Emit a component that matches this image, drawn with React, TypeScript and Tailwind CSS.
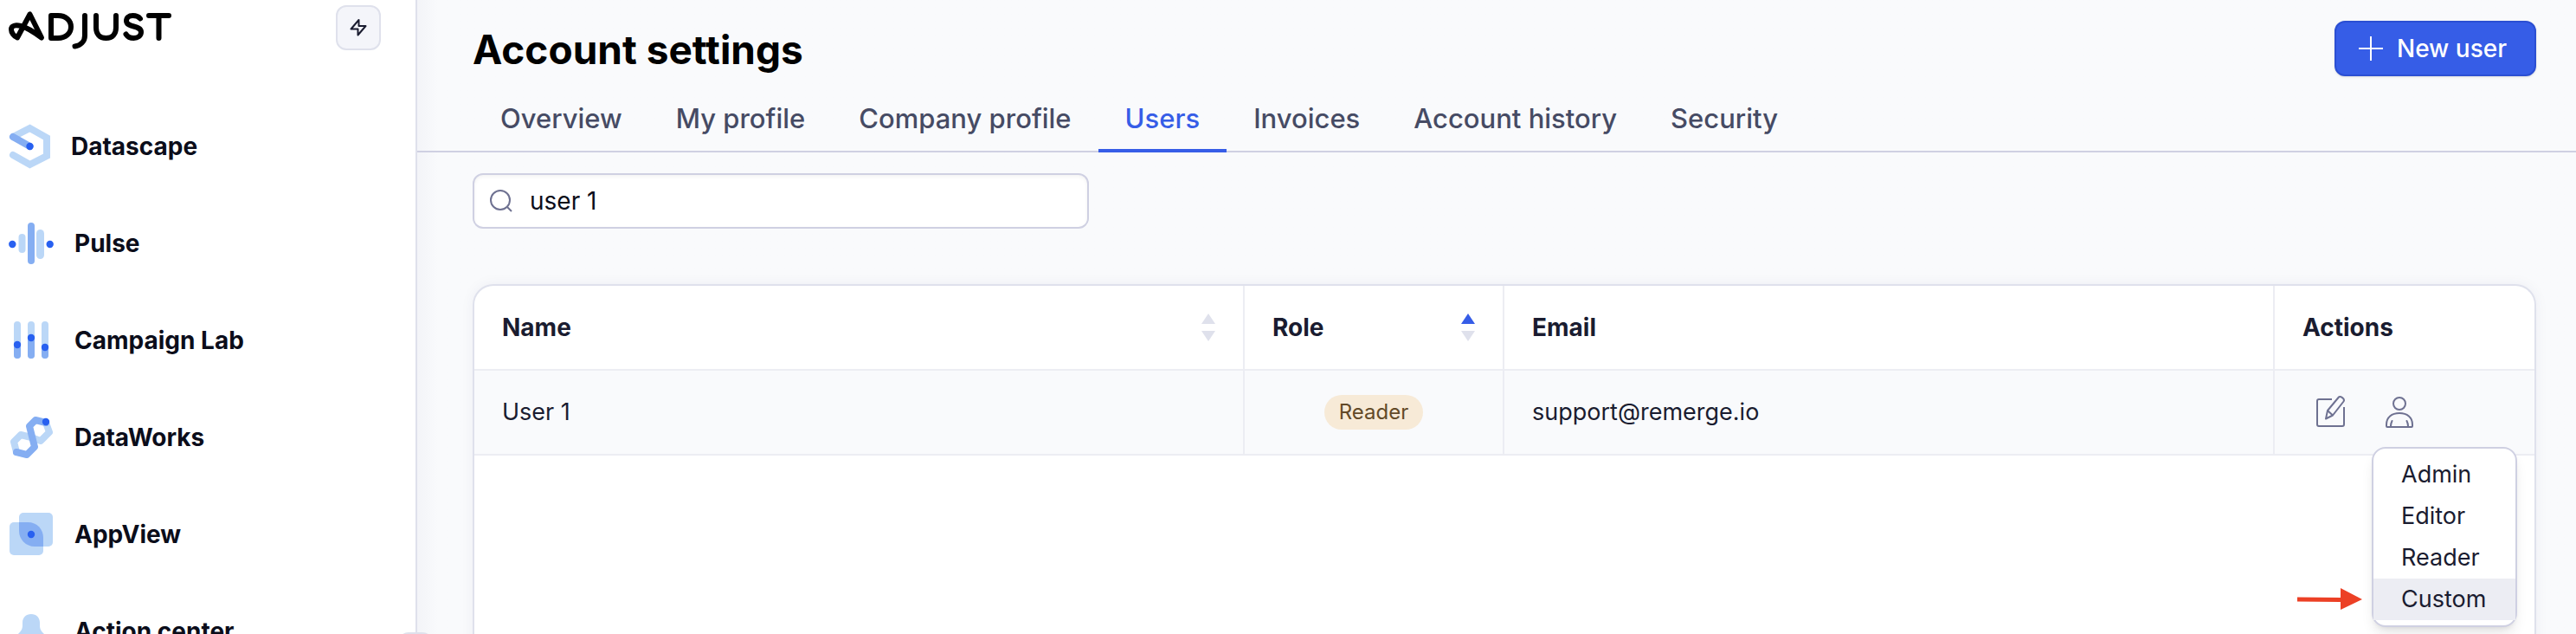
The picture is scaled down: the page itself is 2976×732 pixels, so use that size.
import { clsx } from "clsx";

const tabs = ["Overview", "My profile", "Company profile", "Users", "Invoices", "Account history", "Security"];
const roles = ["Admin", "Editor", "Reader", "Custom"];

function Logo() {
    return (
        <svg viewBox="0 0 190 46" className="w-[190px] h-[46px]" fill="none" stroke="#000" strokeWidth="6" strokeLinecap="round" strokeLinejoin="round" role="img" aria-label="Adjust">
            <path d="M24.500 4.500 10 31.500C6 30 3 25.500 3 22c0-4.500 5-5.500 11-4 8 2 16 7.500 24 13.500z" />
            <path d="M49 6h8c9 0 15 5.500 15 13s-6 13-15 13h-8z" />
            <path d="M88 6v23c0 7-5 11.500-11.500 12.500" />
            <path d="M101 6v14c0 7 4 12 11.500 12S124 27 124 20V6" />
            <path d="M152 9.500c-2-2.500-5-3.500-8.500-3.500-5 0-7.500 2.500-7.500 6 0 8.500 17 4.500 17 13 0 4.500-4 7-8.500 7-4 0-7-1.500-9-4.500" />
            <path d="M162 6h23M173.500 6v26" />
        </svg>
    );
}

function DatascapeIcon() {
    return (
        <svg viewBox="0 0 48 52" className="w-12 h-[52px]" fill="none" strokeWidth="8" strokeLinecap="round">
            <path d="M5 15 24.500 5 44 16v21L24.500 47 5 36" stroke="#bbd7f7" />
            <path d="m5 15 19.500 11" stroke="#85aef2" />
            <circle cx="24.500" cy="26" r="4.200" fill="#2860f0" />
        </svg>
    );
}

function PulseIcon() {
    return (
        <svg viewBox="0 0 52 52" className="w-[52px] h-[52px]">
            <rect x="11.500" y="15" width="8" height="22" rx="4" fill="#bbd7f7" />
            <rect x="22" y="2" width="8" height="48" rx="4" fill="#85aef2" />
            <rect x="32" y="10" width="9" height="34" rx="4.500" fill="#bbd7f7" />
            <circle cx="4.300" cy="27" r="4.200" fill="#2860f0" />
            <circle cx="47.700" cy="27" r="4.200" fill="#2860f0" />
        </svg>
    );
}

function CampaignIcon() {
    return (
        <svg viewBox="0 0 52 52" className="w-[52px] h-[52px]" strokeWidth="8" strokeLinecap="round">
            <path d="M10 8v35M26 8v35M42 8v35" stroke="#bbd7f7" />
            <path d="M10 31v12M26 23v20M42 34v9" stroke="#85aef2" />
            <g fill="#2860f0">
                <circle cx="10" cy="31" r="4.200" />
                <circle cx="26" cy="23" r="4.200" />
                <circle cx="42" cy="34" r="4.200" />
            </g>
        </svg>
    );
}

function DataWorksIcon() {
    return (
        <svg viewBox="0 0 52 52" className="w-[52px] h-[52px]" fill="none" strokeWidth="8" strokeLinecap="round" strokeLinejoin="round">
            <path d="M9 43 6 31l8-8 12 3 11 4 10-10-4-11" stroke="#bbd7f7" />
            <path d="m9 43 12 3 9-9-6-24 7-7 12 3" stroke="#85aef2" />
            <circle cx="43" cy="8" r="4.200" fill="#2860f0" />
        </svg>
    );
}

function AppViewIcon() {
    return (
        <svg viewBox="0 0 52 52" className="w-[52px] h-[52px]">
            <rect x="12" y="1" width="39" height="39" rx="5" fill="#bbd7f7" />
            <rect x="1" y="12" width="39" height="38" rx="5" fill="#bbd7f7" />
            <path d="M12 12h10c11 0 18 8 18 18v10H30c-10 0-18-8-18-18z" fill="#85aef2" />
            <circle cx="26" cy="26" r="4.200" fill="#2860f0" />
        </svg>
    );
}

function BellIcon() {
    return (
        <svg viewBox="0 0 52 52" className="w-[52px] h-[52px]">
            <path d="M26 6c-6 0-10 4-10 10v3c0 5-2 7-6 11-3 3-4 6-4 10h40c0-4-1-7-4-10-4-4-6-6-6-11v-3c0-6-4-10-10-10z" fill="#bbd7f7" />
        </svg>
    );
}

const navItems = [
    { label: "Datascape", icon: <DatascapeIcon /> },
    { label: "Pulse", icon: <PulseIcon /> },
    { label: "Campaign Lab", icon: <CampaignIcon /> },
    { label: "DataWorks", icon: <DataWorksIcon /> },
    { label: "AppView", icon: <AppViewIcon /> },
    { label: "Action center", icon: <BellIcon /> },
];

function Sidebar() {
    return (
        <aside className="relative w-[482px] shrink-0 bg-white border-r-2 border-[#dfe1ec] pl-[10px]">
            <div className="flex items-start justify-between pt-[6px] pr-10">
                <a href="#" className="pt-1.5"><Logo /></a>
                <button aria-label="Quick actions" className="w-[52px] h-[52px] flex items-center justify-center rounded-xl border-2 border-[#dfe1ec] bg-[#f4f5fa]">
                    <svg viewBox="0 0 20 20" className="w-5 h-5" fill="none" stroke="#1a1c30" strokeWidth="2" strokeLinejoin="round">
                        <path d="M10.500 1 1.500 11.500H9.500L9.500 18.500l9-10.500H10.500z" />
                    </svg>
                </button>
            </div>
            <nav className="mt-[55px]">
                {navItems.map(item => (
                    <a key={item.label} href="#" className="flex items-center gap-6 h-28 text-[28px] font-bold text-[#0b0d1a]">
                        {item.icon}
                        {item.label}
                    </a>
                ))}
            </nav>
            <button aria-label="Collapse sidebar" className="absolute top-[730px] -right-5 z-10 w-10 h-10 rounded-xl border-2 border-[#dfe1ec] bg-[#f4f5fa]" />
        </aside>
    );
}

function SortArrows({ asc = false }: { asc?: boolean }) {
    return (
        <svg viewBox="0 0 16 32" className="w-4 h-8">
            <path d="M8 0 16 12H0z" fill={asc ? "#365de7" : "#dfe1ec"} />
            <path d="M8 32 16 20H0z" fill="#dfe1ec" />
        </svg>
    );
}

function RoleMenu() {
    return (
        <div className="absolute top-full right-5 -mt-2 w-[168px] rounded-2xl border-2 border-[#cfd0e2] bg-white py-1.5 shadow-lg">
            {roles.map(role => (
                <button key={role} className={clsx("block w-full h-12 pl-8 text-left", role === "Custom" && "bg-[#ecedf3]")}>
                    {role}
                </button>
            ))}
            <svg viewBox="0 0 76 28" className="absolute right-full bottom-4 mr-3 w-[76px] h-7" fill="#ec4025">
                <path d="M0 11.500 50 12V1l25 13-25 12V17L0 16.500z" />
            </svg>
        </div>
    );
}

function UsersTable() {
    return (
        <div className="mt-16 min-h-[480px] rounded-t-3xl border-2 border-b-0 border-[#dfe1ec] bg-white shadow-[0_0_16px_rgba(30,40,90,0.05)]">
            <table className="w-full table-fixed border-separate border-spacing-0 text-left text-[#1a1c30]">
                <thead className="text-[28px]">
                    <tr className="h-[98px] *:border-b-2 *:border-[#ecedf3] *:px-8 *:font-bold">
                        <th className="border-r-2">
                            <div className="flex items-center justify-between">Name<SortArrows /></div>
                        </th>
                        <th className="w-[300px] border-r-2">
                            <div className="flex items-center justify-between">Role<SortArrows asc /></div>
                        </th>
                        <th className="border-r-2">Email</th>
                        <th className="w-[300px]">Actions</th>
                    </tr>
                </thead>
                <tbody className="text-[27px]">
                    <tr className="h-[98px] bg-[#f9fafc] *:border-b-2 *:border-[#ecedf3] *:px-8">
                        <td className="border-r-2">User 1</td>
                        <td className="border-r-2">
                            <div className="flex justify-center">
                                <span className="h-10 rounded-full bg-[#f7ead7] px-[17px] text-2xl leading-10 text-[#634a28]">Reader</span>
                            </div>
                        </td>
                        <td className="border-r-2">support@remerge.io</td>
                        <td className="relative">
                            <div className="flex items-center gap-10 pl-3">
                                <button aria-label="Edit user">
                                    <svg viewBox="0 0 40 40" className="w-10 h-10" fill="none" stroke="#6e7191" strokeWidth="2" strokeLinejoin="round">
                                        <path d="M22 5H7a2 2 0 0 0-2 2v27a2 2 0 0 0 2 2h27a2 2 0 0 0 2-2V14" />
                                        <path d="m15 27.500 2-9.500L29.500 3c2-2.500 8 1.500 6 4.500L23 23.500zM17 18l6 5.500" />
                                    </svg>
                                </button>
                                <button aria-label="Change role">
                                    <svg viewBox="0 0 40 40" className="w-10 h-10" fill="none" stroke="#6e7191" strokeWidth="2" strokeLinejoin="round" strokeLinecap="round">
                                        <circle cx="20" cy="10" r="7" />
                                        <path d="M5 36v-2c0-8 6-13 15-13s15 5 15 13v2q0 1-1 1H6q-1 0-1-1zM10 36q0-3 1.500-6M30 36q0-3-1.500-6" />
                                    </svg>
                                </button>
                            </div>
                            <RoleMenu />
                        </td>
                    </tr>
                </tbody>
            </table>
        </div>
    );
}

export default function App() {
    return (
        <div className="flex h-screen overflow-hidden bg-[#f9fafc] font-['Inter',sans-serif]">
            <Sidebar />
            <main className="flex-1 min-w-0 bg-linear-to-r from-[#f3f4f8] to-[#f9fafc] to-[24px]">
                <header className="flex items-start justify-between pt-6 pl-16 pr-[46px]">
                    <h1 className="text-[46px] leading-[66px] font-bold text-black">Account settings</h1>
                    <button className="flex items-center gap-4 h-16 pl-[26px] pr-8 rounded-xl border-2 border-[#2b4fd3] bg-[#365de7] text-[28px] font-medium text-white shadow-sm">
                        <svg viewBox="0 0 28 28" className="w-7 h-7" stroke="currentColor" strokeWidth="2">
                            <path d="M14 0v28M0 14h28" />
                        </svg>
                        New user
                    </button>
                </header>
                <nav className="mt-1.5 flex border-b-2 border-[#cfd0e2] pl-[65px]">
                    {tabs.map(tab => (
                        <a
                            key={tab}
                            href="#"
                            className={clsx(
                                "-mb-0.5 h-20 px-[31px] border-b-4 text-[31px] leading-[82px] font-medium",
                                tab === "Users" ? "border-[#365de7] text-[#365de7]" : "border-transparent text-[#464b64]",
                            )}
                        >
                            {tab}
                        </a>
                    ))}
                </nav>
                <div className="pt-6 pl-16 pr-[46px]">
                    <label className="flex items-center gap-5 w-[712px] h-16 pl-[18px] rounded-xl border-2 border-[#cfd0e2] bg-white inset-shadow-sm">
                        <svg viewBox="0 0 26 26" className="w-[26px] h-[26px]" fill="none" stroke="#6e7191" strokeWidth="2">
                            <circle cx="12" cy="12" r="11" />
                            <path d="m20 20 5 5" />
                        </svg>
                        <input type="text" aria-label="Search users" defaultValue="user 1" className="flex-1 text-[28px] text-[#0b0d1a] outline-none" />
                    </label>
                    <UsersTable />
                </div>
            </main>
        </div>
    );
}
